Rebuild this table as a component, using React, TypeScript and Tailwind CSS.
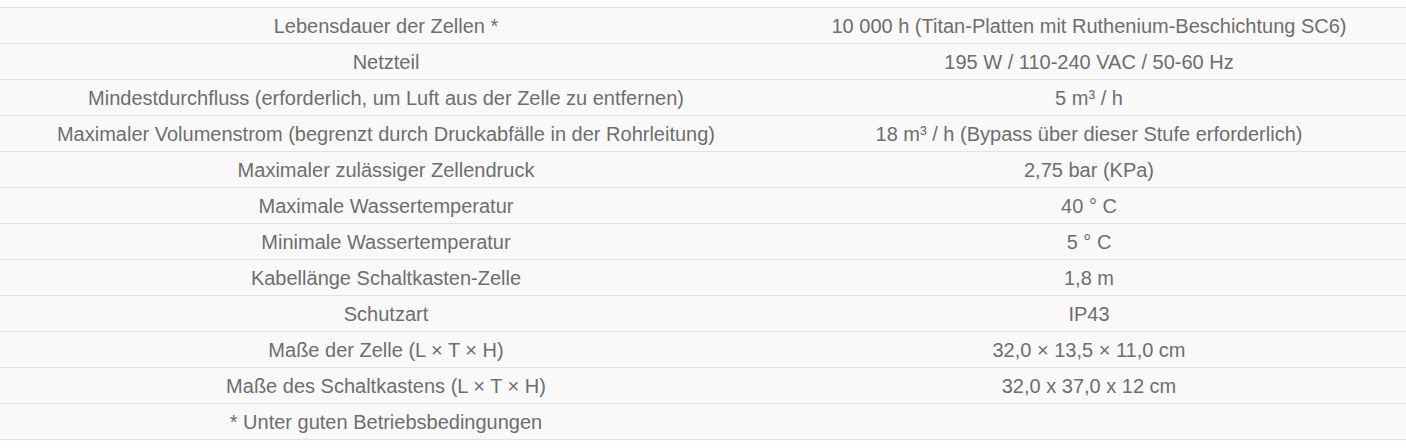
import React from 'react';

const rows: [string, string][] = [
  ['Lebensdauer der Zellen *', '10 000 h (Titan-Platten mit Ruthenium-Beschichtung SC6)'],
  ['Netzteil', '195 W / 110-240 VAC / 50-60 Hz'],
  ['Mindestdurchfluss (erforderlich, um Luft aus der Zelle zu entfernen)', '5 m³ / h'],
  ['Maximaler Volumenstrom (begrenzt durch Druckabfälle in der Rohrleitung)', '18 m³ / h (Bypass über dieser Stufe erforderlich)'],
  ['Maximaler zulässiger Zellendruck', '2,75 bar (KPa)'],
  ['Maximale Wassertemperatur', '40 ° C'],
  ['Minimale Wassertemperatur', '5 ° C'],
  ['Kabellänge Schaltkasten-Zelle', '1,8 m'],
  ['Schutzart', 'IP43'],
  ['Maße der Zelle (L × T × H)', '32,0 × 13,5 × 11,0 cm'],
  ['Maße des Schaltkastens (L × T × H)', '32,0 x 37,0 x 12 cm'],
  ['* Unter guten Betriebsbedingungen', ''],
];

export default function App() {
  return (
    <div className="w-[1406px] h-[448px] bg-[#fdfdfd] pt-[7px] font-['Liberation_Sans',Arial,sans-serif] text-[20px] text-[#6e6e6e]">
      <div className="border-b border-[#e2e2e2] bg-[#f9f9f9]">
        {rows.map(([label, value]) => (
          <div key={label} className="flex h-[36px] items-center border-t border-[#e2e2e2]">
            <div className="w-[772px] text-center">{label}</div>
            <div className="flex-1 text-center">{value}</div>
          </div>
        ))}
      </div>
    </div>
  );
}
